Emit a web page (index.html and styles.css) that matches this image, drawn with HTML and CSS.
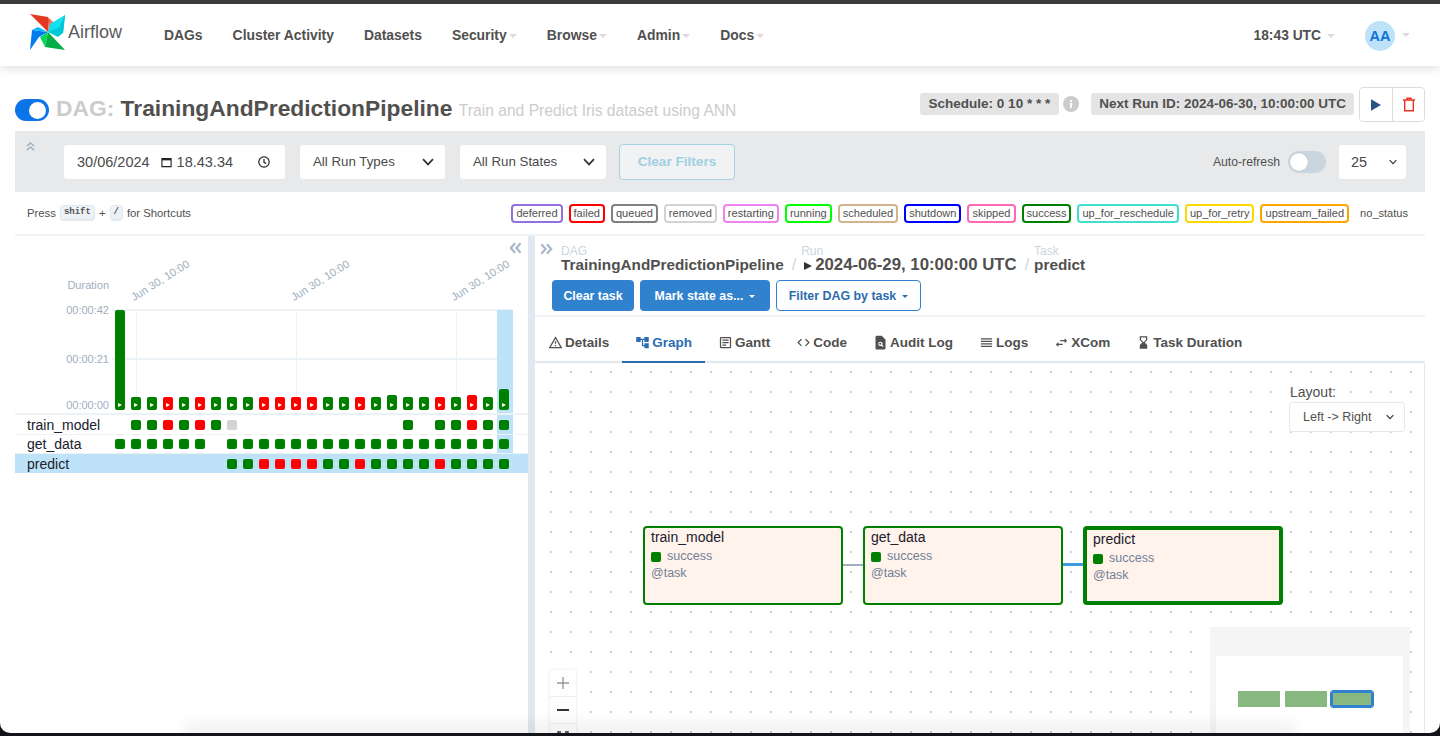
FILE: index.html
```html
<!DOCTYPE html>
<html lang="en">
<head>
  <meta charset="UTF-8" />
  <title>Airflow - TrainingAndPredictionPipeline</title>
  <link rel="stylesheet" href="styles.css">
</head>
<body>
  <header class="navbar">
    <a class="brand">
      <svg class="logo" viewBox="0 0 40 40" width="40" height="40">
        <path fill="#e43921" d="M2 2 L20 5 L21 8 L20 20 Z"/>
        <path fill="#f4725b" d="M20 5 L27 12 L20 20 L21 8 Z"/>
        <path fill="#00ad46" d="M37 38 L17 35 L20 20 Z"/>
        <path fill="#04d659" d="M17 35 L12 25 L20 20 Z"/>
        <path fill="#0cb6ff" d="M37 3 L35 21 L20 20 Z"/>
        <path fill="#00c7d4" d="M37 3 L35 21 L30 25 L20 20 Z"/>
        <path fill="#017cee" d="M2 38 L4 18 L20 20 L11 25 Z"/>
        <path fill="#11e1ee" d="M37 3 L22 12 L20 20 L31 16 Z"/>
        <path fill="#0cb6ff" d="M4 18 L10 15 L20 20 Z"/>
      </svg>
      <span class="brand-name">Airflow</span>
    </a>
    <nav class="nav-links">
      <a>DAGs</a>
      <a>Cluster Activity</a>
      <a>Datasets</a>
      <a class="caret">Security</a>
      <a class="caret">Browse</a>
      <a class="caret">Admin</a>
      <a class="caret">Docs</a>
    </nav>
    <div class="nav-right">
      <a class="caret clock">18:43 UTC</a>
      <a class="caret user"><span class="avatar">AA</span></a>
    </div>
  </header>

  <main class="page">
    <section class="title-row">
      <span class="switch on"></span>
      <h1><span class="dag-label">DAG:</span> TrainingAndPredictionPipeline <small>Train and Predict Iris dataset using ANN</small></h1>
      <div class="title-right">
        <span class="badge schedule">Schedule: 0 10 * * *</span>
        <svg class="info" viewBox="0 0 16 16" width="16" height="16"><circle cx="8" cy="8" r="8" fill="#ccc"/><rect x="7" y="7" width="2" height="5" fill="#fff"/><rect x="7" y="4" width="2" height="2" fill="#fff"/></svg>
        <span class="badge next-run">Next Run ID: 2024-06-30, 10:00:00 UTC</span>
        <div class="btn-group">
          <button><svg viewBox="0 0 12 14" width="10" height="12"><path fill="#2c5282" d="M0 0 L12 7 L0 14 Z"/></svg></button>
          <button><svg viewBox="0 0 12 14" width="12" height="15" fill="none" stroke="#f0301c" stroke-width="1.4"><path d="M0 2.5 H12 M4 2 V.7 H8 V2 M1.7 3 V13.3 H10.3 V3"/></svg></button>
        </div>
      </div>
    </section>

    <section class="filters">
      <svg class="collapse-up" viewBox="0 0 10 10" width="9" height="9" fill="none" stroke="#9fb3c8" stroke-width="1.6"><path d="M1 4.5 L5 1 L9 4.5 M1 9 L5 5.5 L9 9"/></svg>
      <div class="field date-field">
        <span>30/06/2024</span>
        <svg viewBox="0 0 12 12" width="11" height="12" fill="none" stroke="#222" stroke-width="1.2"><path d="M1 2.2 H11 V11 H1 Z"/><path d="M1 3.2 H11" stroke-width="2"/></svg>
        <span>18.43.34</span>
        <svg class="clock-icon" viewBox="0 0 12 12" width="12" height="12" fill="none" stroke="#222" stroke-width="1.2"><circle cx="6" cy="6" r="5.2"/><path d="M6 3 V6.3 L8.2 7.5"/></svg>
      </div>
      <div class="field select-field types">All Run Types
        <svg viewBox="0 0 12 8" width="12" height="8" fill="none" stroke="#333" stroke-width="1.7"><path d="M1 1.2 L6 6.4 L11 1.2"/></svg>
      </div>
      <div class="field select-field states">All Run States
        <svg viewBox="0 0 12 8" width="12" height="8" fill="none" stroke="#333" stroke-width="1.7"><path d="M1 1.2 L6 6.4 L11 1.2"/></svg>
      </div>
      <button class="clear-filters">Clear Filters</button>
      <div class="refresh">
        <span>Auto-refresh</span>
        <span class="switch off"></span>
        <div class="field select-field count">25
          <svg viewBox="0 0 12 8" width="8" height="6" fill="none" stroke="#333" stroke-width="1.7"><path d="M1 1.2 L6 6.4 L11 1.2"/></svg>
        </div>
      </div>
    </section>

    <section class="legend-row">
      <p class="shortcuts">Press <kbd>shift</kbd> + <kbd>/</kbd> for Shortcuts</p>
      <div class="legend">
        <span class="chip deferred">deferred</span>
        <span class="chip failed">failed</span>
        <span class="chip queued">queued</span>
        <span class="chip removed">removed</span>
        <span class="chip restarting">restarting</span>
        <span class="chip running">running</span>
        <span class="chip scheduled">scheduled</span>
        <span class="chip shutdown">shutdown</span>
        <span class="chip skipped">skipped</span>
        <span class="chip success">success</span>
        <span class="chip reschedule">up_for_reschedule</span>
        <span class="chip retry">up_for_retry</span>
        <span class="chip upstream">upstream_failed</span>
        <span class="chip none">no_status</span>
      </div>
    </section>

    <section class="split">
      <div class="grid-panel">
        <svg class="collapse-left" viewBox="0 0 14 12" width="13" height="12" fill="none" stroke="#a9b8cc" stroke-width="2.4"><path d="M6.5 1 L2 6 L6.5 11 M12.5 1 L8 6 L12.5 11"/></svg>
        <div class="chart">
          <span class="highlight-col"></span>
          <span class="grid-h top"></span>
          <span class="grid-h mid"></span>
          <span class="grid-v v1"></span>
          <span class="grid-v v2"></span>
          <span class="grid-v v3"></span>
          <span class="axis duration">Duration</span>
          <span class="axis y42">00:00:42</span>
          <span class="axis y21">00:00:21</span>
          <span class="axis y00">00:00:00</span>
          <span class="tick t1">Jun 30, 10:00</span>
          <span class="tick t2">Jun 30, 10:00</span>
          <span class="tick t3">Jun 30, 10:00</span>
          <div class="bars">
            <i class="bar g tall"></i><i class="bar g"></i><i class="bar g"></i><i class="bar r"></i><i class="bar g"></i>
            <i class="bar r"></i><i class="bar g"></i><i class="bar g"></i><i class="bar g"></i><i class="bar r"></i>
            <i class="bar r"></i><i class="bar r"></i><i class="bar r"></i><i class="bar g"></i><i class="bar g"></i>
            <i class="bar r"></i><i class="bar g"></i><i class="bar g more"></i><i class="bar g"></i><i class="bar g"></i>
            <i class="bar r"></i><i class="bar g"></i><i class="bar r more"></i><i class="bar g"></i><i class="bar g last"></i>
          </div>
        </div>
        <div class="task-row">
          <span class="task-name">train_model</span>
          <i class="sq"></i><i class="sq g"></i><i class="sq g"></i><i class="sq r"></i><i class="sq g"></i>
          <i class="sq r"></i><i class="sq g"></i><i class="sq n"></i><i class="sq"></i><i class="sq"></i>
          <i class="sq"></i><i class="sq"></i><i class="sq"></i><i class="sq"></i><i class="sq"></i>
          <i class="sq"></i><i class="sq"></i><i class="sq"></i><i class="sq g"></i><i class="sq"></i>
          <i class="sq g"></i><i class="sq g"></i><i class="sq r"></i><i class="sq g"></i><i class="sq g"></i>
        </div>
        <div class="task-row">
          <span class="task-name">get_data</span>
          <i class="sq g"></i><i class="sq g"></i><i class="sq g"></i><i class="sq g"></i><i class="sq g"></i>
          <i class="sq g"></i><i class="sq"></i><i class="sq g"></i><i class="sq g"></i><i class="sq g"></i>
          <i class="sq g"></i><i class="sq g"></i><i class="sq g"></i><i class="sq g"></i><i class="sq g"></i>
          <i class="sq g"></i><i class="sq g"></i><i class="sq g"></i><i class="sq g"></i><i class="sq g"></i>
          <i class="sq g"></i><i class="sq g"></i><i class="sq g"></i><i class="sq g"></i><i class="sq g"></i>
        </div>
        <div class="task-row selected">
          <span class="task-name">predict</span>
          <i class="sq"></i><i class="sq"></i><i class="sq"></i><i class="sq"></i><i class="sq"></i>
          <i class="sq"></i><i class="sq"></i><i class="sq g"></i><i class="sq g"></i><i class="sq r"></i>
          <i class="sq r"></i><i class="sq r"></i><i class="sq r"></i><i class="sq g"></i><i class="sq g"></i>
          <i class="sq r"></i><i class="sq g"></i><i class="sq g"></i><i class="sq g"></i><i class="sq g"></i>
          <i class="sq r"></i><i class="sq g"></i><i class="sq g"></i><i class="sq g"></i><i class="sq g"></i>
        </div>
      </div>

      <div class="details-panel">
        <svg class="collapse-right" viewBox="0 0 14 12" width="13" height="12" fill="none" stroke="#a9b8cc" stroke-width="2.4"><path d="M1.5 1 L6 6 L1.5 11 M7.5 1 L12 6 L7.5 11"/></svg>
        <div class="breadcrumb">
          <div class="crumb"><label>DAG</label><strong>TrainingAndPredictionPipeline</strong></div>
          <span class="sep">/</span>
          <div class="crumb run"><label>Run</label><strong><span class="run-arrow"></span>2024-06-29, 10:00:00 UTC</strong></div>
          <span class="sep">/</span>
          <div class="crumb"><label>Task</label><strong>predict</strong></div>
        </div>
        <div class="actions">
          <button class="btn solid clear-task">Clear task</button>
          <button class="btn solid drop mark-state">Mark state as...</button>
          <button class="btn outline drop filter-task">Filter DAG by task</button>
        </div>
        <div class="tabs">
          <a class="tab"><svg viewBox="0 0 24 24" width="15" height="15"><path d="M12 5.99L19.53 19H4.47L12 5.99M12 2L1 21h22L12 2zm1 14h-2v2h2v-2zm0-6h-2v4h2v-4z"/></svg>Details</a>
          <a class="tab active"><svg viewBox="0 0 24 24" width="15" height="15"><path d="M22 11V3h-7v3H9V3H2v8h7V8h2v10h4v3h7v-8h-7v3h-2V8h2v3z"/></svg>Graph</a>
          <a class="tab"><svg viewBox="0 0 24 24" width="15" height="15"><path d="M19 3H5a2 2 0 0 0-2 2v14a2 2 0 0 0 2 2h14a2 2 0 0 0 2-2V5a2 2 0 0 0-2-2zm0 16H5V5h14v14zM7 7h10v2H7V7zm0 4h10v2H7v-2zm0 4h6v2H7v-2z"/></svg>Gantt</a>
          <a class="tab"><svg viewBox="0 0 24 24" width="15" height="15"><path d="M9.4 16.6L4.8 12l4.6-4.6L8 6l-6 6 6 6 1.4-1.4zm5.2 0l4.6-4.6-4.6-4.6L16 6l6 6-6 6-1.4-1.4z"/></svg>Code</a>
          <a class="tab"><svg viewBox="0 0 24 24" width="15" height="15"><path d="M14 1H6a2 2 0 0 0-2 2v18a2 2 0 0 0 2 2h12a2 2 0 0 0 2-2V7l-6-6zm1.5 18.2l-2-2a3.5 3.5 0 1 1 1.4-1.4l2 2-1.4 1.4z"/><circle cx="11.500" cy="14" r="1.700"/></svg>Audit Log</a>
          <a class="tab"><svg viewBox="0 0 24 24" width="15" height="15"><path d="M3 15h18v-2H3v2zm0 4h18v-2H3v2zm0-8h18V9H3v2zm0-6v2h18V5H3z"/></svg>Logs</a>
          <a class="tab"><svg viewBox="0 0 24 24" width="15" height="15"><path d="M6.99 11L3 15l3.99 4v-3H14v-2H6.99v-3zM21 9l-3.990-4v3H10v2h7.010v3L21 9z"/></svg>XCom</a>
          <a class="tab"><svg viewBox="0 0 24 24" width="15" height="15"><path d="M18 22l-.01-6L14 12l3.990-4.010L18 2H6v6l4 4-4 3.990V22h12zM8 7.500V4h8v3.500l-4 4-4-4z"/></svg>Task Duration</a>
        </div>

        <div class="graph">
          <div class="layout-picker">
            <label>Layout:</label>
            <div class="layout-select">Left -&gt; Right
              <svg viewBox="0 0 12 8" width="8" height="6" fill="none" stroke="#333" stroke-width="1.7"><path d="M1 1.2 L6 6.4 L11 1.2"/></svg>
            </div>
          </div>

          <span class="edge edge-a"></span>
          <span class="edge edge-b"></span>
          <div class="node n-train">
            <h4>train_model</h4>
            <p class="state"><i></i>success</p>
            <p class="op">@task</p>
          </div>
          <div class="node n-data">
            <h4>get_data</h4>
            <p class="state"><i></i>success</p>
            <p class="op">@task</p>
          </div>
          <div class="node n-predict">
            <h4>predict</h4>
            <p class="state"><i></i>success</p>
            <p class="op">@task</p>
          </div>

          <div class="zoom-controls">
            <button><svg viewBox="0 0 12 12" width="12" height="12" fill="none" stroke="#999" stroke-width="1.4"><path d="M6 0 V12 M0 6 H12"/></svg></button>
            <button><svg viewBox="0 0 12 2" width="12" height="2"><rect width="12" height="2" fill="#333"/></svg></button>
            <button><svg viewBox="0 0 12 12" width="12" height="12" fill="none" stroke="#333" stroke-width="1.4"><path d="M1 4 V1 H4 M8 1 H11 V4 M1 8 V11 H4 M8 11 H11 V8"/></svg></button>
          </div>

          <div class="minimap">
            <div class="mini-view">
              <span class="mini-node"></span>
              <span class="mini-node"></span>
              <span class="mini-node current"></span>
            </div>
          </div>
        </div>
      </div>
    </section>
  </main>

  <div class="bottom-shade"></div>
  <div class="window-edge"></div>
</body>
</html>
```

FILE: styles.css
```css
* {
  box-sizing: border-box;
}

html, body {
  margin: 0;
  height: 100%;
  overflow: hidden;
}

body {
  font-family: "Liberation Sans", Arial, sans-serif;
  color: #51504f;
  background: #fff;
  display: flex;
  flex-direction: column;
  border-top: 4px solid #3a3a3a;
}

button {
  font-family: inherit;
  cursor: pointer;
}

/* top bar */
.navbar {
  height: 62px;
  flex: none;
  display: flex;
  align-items: center;
  background: #fff;
  box-shadow: 0 2px 10px rgba(0, 0, 0, 0.14);
  position: relative;
  z-index: 2;
}

.brand {
  display: flex;
  align-items: center;
  margin-left: 28px;
  width: 136px;
}

.logo {
  flex: none;
  margin-top: -6px;
}

.brand-name {
  font-size: 18px;
  color: #5b5b5b;
  margin-top: -6px;
}

.nav-links {
  display: flex;
  gap: 30px;
  font-size: 13.9px;
  font-weight: bold;
}

.caret::after {
  content: "";
  display: inline-block;
  border: 4px solid transparent;
  border-top-color: #e3d5e6;
  border-bottom: 0;
  margin-left: 2px;
  vertical-align: 2px;
}

.nav-right {
  margin-left: auto;
  display: flex;
  align-items: center;
  font-size: 13.8px;
  font-weight: bold;
  padding-right: 30px;
}

.clock::after {
  margin-left: 6px;
}

.user {
  margin-left: 30px;
  display: flex;
  align-items: center;
}

.user::after {
  margin-left: 7px;
}

.avatar {
  width: 30px;
  height: 30px;
  border-radius: 50%;
  background: #bee3f8;
  color: #0b74e0;
  font-size: 14.5px;
  display: flex;
  align-items: center;
  justify-content: center;
  margin-top: 2px;
}

/* main page */
.page {
  flex: 1;
  min-height: 0;
  padding: 0 15px;
  display: flex;
  flex-direction: column;
}

.title-row {
  height: 65px;
  flex: none;
  display: flex;
  position: relative;
}

.switch {
  display: block;
  flex: none;
  width: 34px;
  height: 22px;
  border-radius: 11px;
  position: relative;
}

.switch::after {
  content: "";
  position: absolute;
  top: 3px;
  width: 16px;
  height: 16px;
  background: #fff;
  border-radius: 50%;
}

.switch.on {
  background: #0b74e8;
  margin-top: 33px;
}

.switch.on::after {
  right: 3px;
  width: 17px;
  height: 17px;
  top: 2.5px;
}

.switch.off {
  width: 38px;
  background: #cbd5e0;
}

.switch.off::after {
  left: 2px;
  width: 18px;
  height: 18px;
  top: 2px;
  box-shadow: 0 0 1px rgba(0, 0, 0, 0.3);
}

h1 {
  margin: 27px 0 0 7px;
  font-size: 22.8px;
  line-height: 30px;
  font-weight: bold;
  white-space: nowrap;
}

.dag-label {
  color: #cccccc;
}

h1 small {
  font-size: 15.65px;
  font-weight: normal;
  color: #cccccc;
}

.title-right {
  margin-left: auto;
  display: flex;
  align-items: flex-start;
  padding-top: 21px;
}

.badge {
  height: 22px;
  line-height: 22px;
  padding: 0 8px;
  background: #e4e4e4;
  border-radius: 3px;
  font-size: 13.5px;
  font-weight: bold;
  margin-top: 6px;
}

.schedule {
  padding: 0 9px;
}

.info {
  margin: 9px 12px 0 4px;
}

.btn-group {
  margin-left: 5px;
  display: flex;
  height: 35px;
  border: 1px solid #dcdcdc;
  border-radius: 4px;
}

.btn-group button {
  width: 32px;
  background: #fff;
  border: 0;
  padding: 0;
  display: flex;
  align-items: center;
  justify-content: center;
  border-radius: 4px;
}

.btn-group button + button {
  border-left: 1px solid #dcdcdc;
  border-radius: 0 4px 4px 0;
}

/* filters */
.filters {
  height: 61px;
  flex: none;
  background: #e8e9ea;
  display: flex;
  align-items: center;
  padding-left: 49px;
  position: relative;
  font-size: 14.5px;
}

.collapse-up {
  position: absolute;
  left: 11px;
  top: 11px;
}

.field {
  height: 34px;
  background: #fff;
  border-radius: 3px;
  display: flex;
  align-items: center;
  color: #4a4a4a;
}

.date-field {
  width: 221px;
  padding: 0 15px 0 13px;
  margin-right: 15px;
}

.date-field svg {
  margin: 0 5px 0 11px;
}

.date-field .clock-icon {
  margin: 0 0 0 auto;
}

.select-field {
  justify-content: space-between;
  padding: 0 11px 0 13px;
  font-size: 13.3px;
}

.types {
  width: 145px;
  margin-right: 15px;
}

.states {
  width: 146px;
  margin-right: 13px;
}

.clear-filters {
  width: 116px;
  height: 36px;
  background: #f1f2f3;
  border: 1px solid #a5d2e4;
  border-radius: 4px;
  color: #9fd0e3;
  font-size: 13.6px;
  font-weight: bold;
}

.refresh {
  margin-left: auto;
  display: flex;
  align-items: center;
  font-size: 12.2px;
  padding-right: 19px;
}

.refresh .switch {
  margin: 0 13px 0 8px;
}

.count {
  width: 67px;
  font-size: 14.5px;
  padding: 0 9px 0 12px;
}

/* legend */
.legend-row {
  height: 44px;
  flex: none;
  display: flex;
  align-items: center;
  justify-content: space-between;
  padding: 0 12px;
  border-bottom: 2px solid #edf2f7;
  font-size: 11.05px;
}

.shortcuts {
  margin: 0;
  display: flex;
  align-items: center;
  gap: 4px;
  font-size: 11.3px;
}

kbd {
  font-family: "Liberation Mono", monospace;
  font-size: 9px;
  font-weight: bold;
  line-height: 13px;
  padding: 0 3px;
  background: #edf2f7;
  border: 1px solid #e2e8f0;
  border-bottom-width: 2px;
  border-radius: 4px;
}

.legend {
  display: flex;
  gap: 6px;
}

.chip {
  height: 19px;
  line-height: 15px;
  padding: 0 3px;
  border: 2px solid #ccc;
  border-radius: 4px;
  background: #fff;
}

.deferred { border-color: #9370db; }
.failed { border-color: #ff0000; }
.queued { border-color: #808080; }
.removed { border-color: #d3d3d3; }
.restarting { border-color: #ee82ee; }
.running { border-color: #00ff00; }
.scheduled { border-color: #d2b48c; }
.shutdown { border-color: #0000ff; }
.skipped { border-color: #ff69b4; }
.success { border-color: #008000; }
.reschedule { border-color: #40e0d0; }
.retry { border-color: #ffd700; }
.upstream { border-color: #ffa500; }
.none { border-color: transparent; }

/* split */
.split {
  flex: 1;
  min-height: 0;
  display: flex;
}

.grid-panel {
  width: 513px;
  flex: none;
  position: relative;
  z-index: 0;
}

.collapse-left {
  position: absolute;
  right: 6px;
  top: 6px;
}

.chart {
  height: 179px;
  padding: 74px 0 0 97px;
  border-bottom: 2px solid #edf2f7;
  position: relative;
  margin-bottom: 1px;
}

.highlight-col {
  position: absolute;
  left: 482px;
  top: 74px;
  width: 16px;
  height: 144px;
  background: #bee3f8;
  z-index: -1;
}

.grid-h {
  position: absolute;
  left: 97px;
  width: 400px;
  height: 2px;
  background: #edf2f7;
  z-index: -2;
}

.grid-h.top { top: 73px; }
.grid-h.mid { top: 122px; }

.grid-v {
  position: absolute;
  top: 74px;
  height: 100px;
  width: 1px;
  background: #edf2f7;
  z-index: -2;
}

.v1 { left: 121px; }
.v2 { left: 281px; }
.v3 { left: 441px; }

.axis {
  position: absolute;
  right: 419px;
  font-size: 11px;
  color: #a0aec0;
  white-space: nowrap;
  line-height: 12px;
}

.duration { top: 43px; }
.y42 { top: 68px; }
.y21 { top: 117px; }
.y00 { top: 163px; }

.tick {
  position: absolute;
  font-size: 11px;
  line-height: 12px;
  color: #a0aec0;
  white-space: nowrap;
  transform: rotate(-32deg);
  transform-origin: left bottom;
  top: 55px;
}

.t1 { left: 120px; }
.t2 { left: 280px; }
.t3 { left: 440px; }

.bars {
  display: flex;
  align-items: flex-end;
  height: 100px;
}

.bar {
  width: 10px;
  height: 13px;
  margin: 0 3px;
  border-radius: 2px;
  display: flex;
  align-items: flex-end;
  justify-content: center;
  padding-bottom: 3px;
}

.bar::after {
  content: "";
  border-left: 4px solid #fff;
  border-top: 2.5px solid transparent;
  border-bottom: 2.5px solid transparent;
}

.bar.tall { height: 100px; }
.bar.more { height: 15px; }
.bar.last { height: 21px; }

.g { background: #008000; }
.r { background: #ff0000; }
.n { background: #d3d3d3; }

.task-row {
  height: 19px;
  display: flex;
  align-items: center;
  padding-left: 97px;
  position: relative;
  border-bottom: 1px solid #edf2f7;
}

.task-row.selected {
  background: #bee3f8;
  border-bottom: 0;
}

.task-name {
  position: absolute;
  left: 12px;
  font-size: 14px;
  color: #1a202c;
}

.sq {
  width: 10px;
  height: 10px;
  margin: 0 3px;
  border-radius: 2px;
}

.details-panel {
  flex: 1;
  min-width: 0;
  border-left: 7px solid #e2e8f0;
  display: flex;
  flex-direction: column;
  position: relative;
}

.collapse-right {
  position: absolute;
  left: 5px;
  top: 7px;
}

.breadcrumb {
  display: flex;
  align-items: flex-end;
  padding: 8px 0 0 26px;
  height: 37px;
  flex: none;
}

.crumb label {
  display: block;
  font-size: 12px;
  line-height: 13px;
  color: #cbd5e0;
  margin-bottom: -2px;
}

.crumb strong {
  font-size: 15.3px;
  line-height: 17px;
  display: block;
  white-space: nowrap;
}

.crumb.run strong {
  font-size: 16.8px;
}

.sep {
  color: #cbd5e0;
  font-size: 16px;
  line-height: 17px;
  margin: 0 5px 0 8px;
}

.run-arrow {
  display: inline-block;
  border-left: 8px solid #333;
  border-top: 4.500px solid transparent;
  border-bottom: 4.500px solid transparent;
  margin: 0 3px 0 3px;
}

.actions {
  display: flex;
  gap: 6px;
  padding: 7px 0 6px 17px;
  height: 44px;
  flex: none;
  border-bottom: 2px solid #edf2f7;
}

.btn {
  height: 31px;
  padding: 0;
  font-size: 12.4px;
  font-weight: bold;
  border-radius: 4px;
}

.clear-task { width: 82px; }
.mark-state { width: 130px; }
.filter-task { width: 145px; }

.solid {
  background: #3182ce;
  color: #fff;
  border: 0;
}

.outline {
  background: #fff;
  color: #2b6cb0;
  border: 1px solid #3182ce;
}

.drop::after {
  content: "";
  display: inline-block;
  border: 3.500px solid transparent;
  border-top-color: currentColor;
  border-bottom: 0;
  margin-left: 6px;
  vertical-align: 2px;
}

.tabs {
  height: 46px;
  flex: none;
  display: flex;
  border-bottom: 2px solid #e2e8f0;
  font-size: 13.5px;
  font-weight: bold;
}

.tab {
  display: flex;
  align-items: center;
  gap: 2px;
  padding: 7px 13px 0;
  margin-bottom: -2px;
  border-bottom: 2px solid transparent;
}

.tab svg {
  fill: currentColor;
}

.tab.active {
  color: #2b6cb0;
  border-bottom-color: #2b6cb0;
}

.graph {
  flex: 1;
  min-height: 0;
  position: relative;
  border-right: 1px solid #e2e8f0;
  overflow: hidden;
  margin-top: 1px;
  background-image: radial-gradient(circle, #d0d0d0 0.8px, transparent 1px);
  background-size: 20px 20px;
  background-position: 6px -2px;
}

.layout-picker {
  position: absolute;
  right: 19px;
  top: 21px;
  width: 116px;
  font-size: 14px;
}

.layout-picker label {
  display: block;
  line-height: 15px;
  margin: 0 0 2px 1px;
}

.layout-select {
  height: 30px;
  background: #fff;
  border: 1px solid #e2e8f0;
  border-radius: 3px;
  font-size: 12.5px;
  display: flex;
  align-items: center;
  justify-content: space-between;
  padding: 0 10px 0 13px;
}

.node {
  position: absolute;
  top: 162px;
  width: 200px;
  height: 79px;
  background: #fff3ec;
  border: 2px solid #008000;
  border-radius: 4px;
  padding: 1px 6px;
}

.n-train { left: 108px; }
.n-data { left: 328px; }
.n-predict { left: 548px; border-width: 4px; }

.node h4 {
  margin: 0;
  font-size: 14px;
  font-weight: normal;
  line-height: 17px;
  color: #1a202c;
}

.node p {
  margin: 0;
  font-size: 12.5px;
  line-height: 17px;
  color: #718096;
}

.state {
  display: flex;
  align-items: center;
  padding-top: 2px;
}

.state i {
  width: 10px;
  height: 10px;
  background: #008000;
  border-radius: 2px;
  margin-right: 6px;
}

.edge {
  position: absolute;
  width: 20px;
}

.edge-a {
  left: 308px;
  top: 200px;
  height: 2px;
  background: #a0aec0;
}

.edge-b {
  left: 528px;
  top: 199px;
  height: 3px;
  background: #4299e1;
}

.zoom-controls {
  position: absolute;
  left: 15px;
  top: 306px;
  width: 26px;
  box-shadow: 0 0 3px rgba(0, 0, 0, 0.12);
}

.zoom-controls button {
  width: 26px;
  height: 27px;
  display: flex;
  align-items: center;
  justify-content: center;
  background: #fefefe;
  border: 0;
  border-bottom: 1px solid #eee;
  padding: 0;
}

.minimap {
  position: absolute;
  left: 675px;
  top: 263px;
  width: 200px;
  height: 120px;
  background: #f5f5f5;
  padding: 29px 6px 0;
}

.mini-view {
  width: 187px;
  height: 80px;
  background: #fff;
  display: flex;
  gap: 5px;
  padding: 35px 0 0 22px;
}

.mini-node {
  width: 42px;
  height: 16px;
  background: #86b87f;
}

.mini-node.current {
  margin-left: -1px;
  border: 2px solid #3182ce;
  outline: 1px solid #3182ce;
  border-radius: 2px;
}

/* window frame from the screenshot */
.bottom-shade {
  position: fixed;
  left: 190px;
  right: 150px;
  bottom: 0;
  height: 3px;
  box-shadow: 0 -2px 18px 6px rgba(0, 0, 0, 0.08);
  z-index: 5;
}

.window-edge {
  position: fixed;
  left: 0;
  right: 0;
  top: 0;
  bottom: 3px;
  border-radius: 0 0 10px 10px;
  box-shadow: 0 0 0 16px #15131a;
  pointer-events: none;
  z-index: 6;
}
```
